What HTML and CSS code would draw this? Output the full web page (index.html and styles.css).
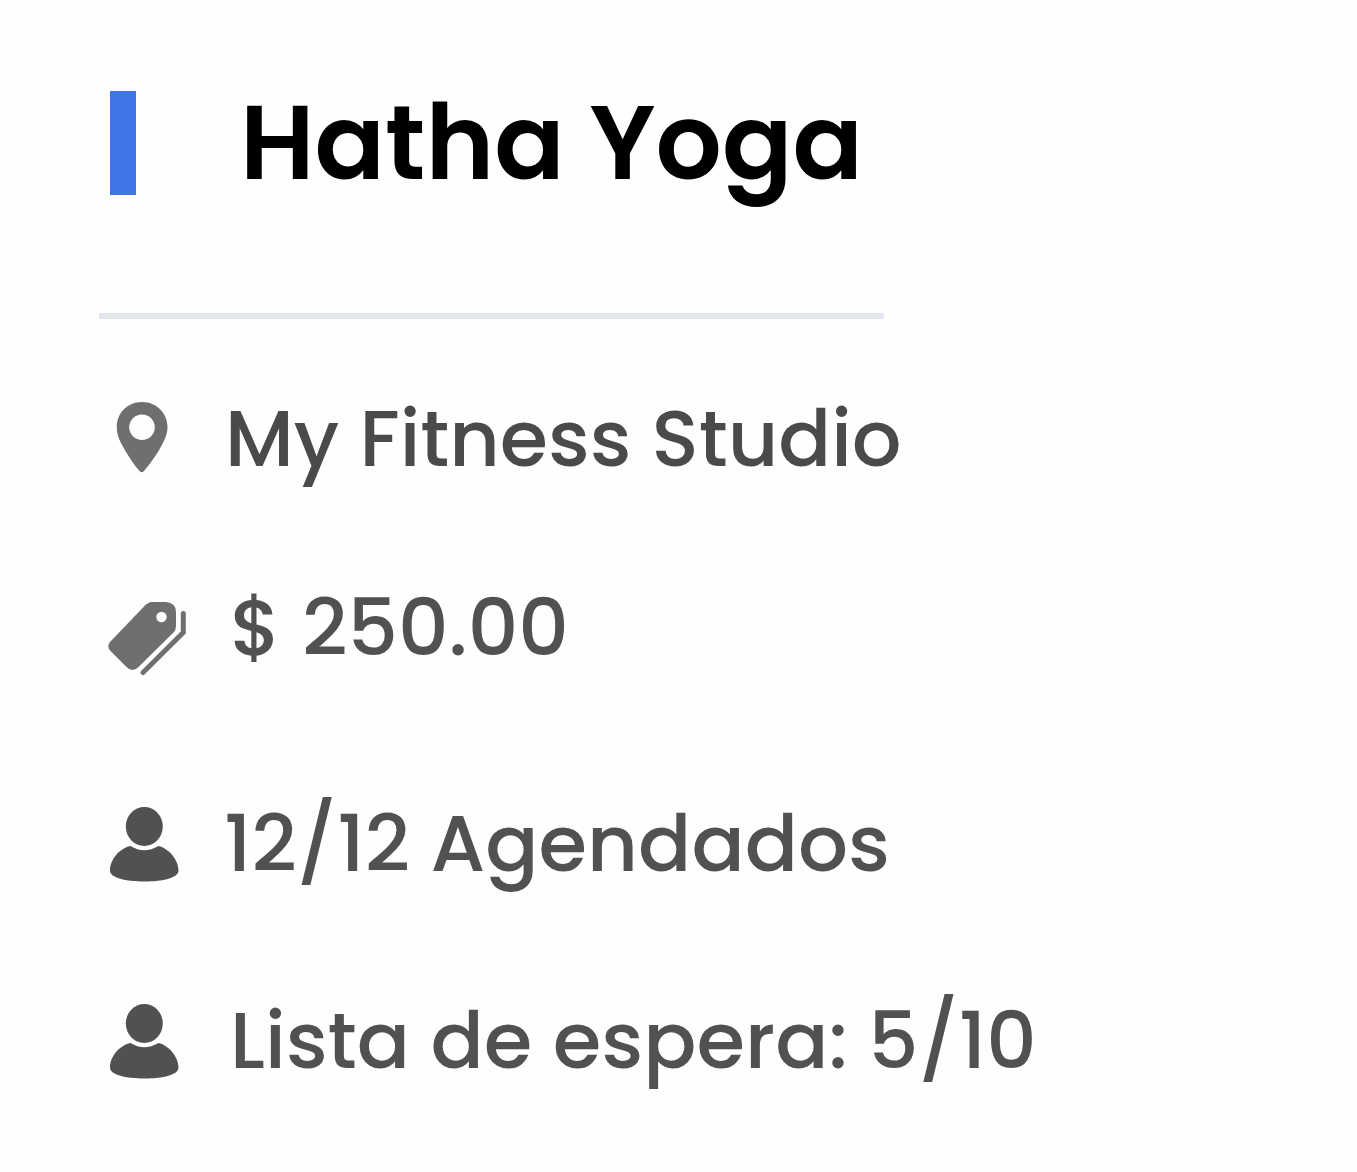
FILE: index.html
```html
<!DOCTYPE html>
<html lang="es">
<head>
  <meta charset="UTF-8" />
  <meta name="viewport" content="width=device-width, initial-scale=1.0"/>
  <title>Hatha Yoga</title>
  <link rel="stylesheet" href="styles.css">
</head>
<body>

<main class="class-card">
  <header class="card-header">
    <span class="color-bar"></span>
    <h1>Hatha Yoga</h1>
  </header>

  <ul class="details">
    <li class="detail location">
      <svg class="icon" width="90" height="80" viewBox="0 0 90 80">
        <path fill-rule="evenodd" d="M43 4C28.500 4 17.800 15 17.800 29C17.800 37 20.500 42.500 25 50.500C29.500 58.500 35 67 40.800 73.200Q42.800 75.500 44.800 73.200C50 67 56.500 58.500 61 50.500C65 43 68.500 37 68.500 29C68.500 15 57.500 4 43 4ZM43 16.500A12.800 12.800 0 1 1 43 42.100A12.800 12.800 0 1 1 43 16.500Z"/>
      </svg>
      <span class="text">My Fitness Studio</span>
    </li>
    <li class="detail price">
      <svg class="icon" width="90" height="80" viewBox="0 0 90 80">
        <path fill-rule="evenodd" d="M53 5H67Q77 6 77 15V29Q77 33 74.500 35.500L39.500 70Q33.500 76 27.500 70L11 53.500Q7.500 49 11 45L45 9.500Q49 5 53 5ZM62.500 14.800A5.200 5.200 0 1 0 62.500 25.200A5.200 5.200 0 1 0 62.500 14.800Z" transform="translate(0 11)"/>
        <path class="tag-edge" d="M84.300 27.500V46.500L44 86.500"/>
      </svg>
      <span class="text">$ 250.00</span>
    </li>
    <li class="detail booked">
      <svg class="icon" width="90" height="80" viewBox="0 0 90 80">
        <ellipse cx="45.300" cy="23.500" rx="18.500" ry="19.500"/>
        <path d="M31.500 43Q45 51.500 59.500 43C70 45.500 79.500 57 79.500 67.500C79.500 75 64 78.500 45.500 78.500S11 75 11 67.500C11 57 20 45.500 31.500 43Z"/>
      </svg>
      <span class="text">12/12 Agendados</span>
    </li>
    <li class="detail waitlist">
      <svg class="icon" width="90" height="80" viewBox="0 0 90 80">
        <ellipse cx="45.300" cy="23.500" rx="18.500" ry="19.500"/>
        <path d="M31.500 43Q45 51.500 59.500 43C70 45.500 79.500 57 79.500 67.500C79.500 75 64 78.500 45.500 78.500S11 75 11 67.500C11 57 20 45.500 31.500 43Z"/>
      </svg>
      <span class="text">Lista de espera: 5/10</span>
    </li>
  </ul>
</main>

</body>
</html>
```

FILE: styles.css
```css
* {
  box-sizing: border-box;
}

body {
  margin: 0;
  background-color: #fefefe;
  font-family: Poppins, Inter, sans-serif;
}

.class-card {
  min-height: 1172px;
  padding: 82px 0 0 99px;
}

.card-header {
  display: flex;
  width: 785px;
  height: 237px;
  padding-left: 11px;
  border-bottom: 6px solid #e4e6ee;
}

.color-bar {
  width: 26px;
  height: 104px;
  margin-top: 9px;
  background-color: #3f75e6;
}

h1 {
  margin: 0 0 0 104px;
  color: #000;
  font-size: 104px;
  font-weight: 600;
  line-height: 122px;
  white-space: nowrap;
}

.details {
  margin: 0;
  padding: 79px 0 0;
  list-style: none;
}

.detail {
  display: flex;
  height: 80px;
  color: #525053;
  font-size: 78.6px;
  font-weight: 500;
  line-height: 82px;
  white-space: nowrap;
}

.icon {
  flex: none;
  overflow: visible;
  fill: #525053;
}

.text {
  margin-left: 36px;
}

.location {
  color: #4b494c;
  font-size: 78px;
}

.location .icon,
.price .icon {
  fill: #706e71;
}

.price {
  margin-top: 108px;
  font-size: 79px;
  line-height: 84px;
}

.price .icon .tag-edge {
  fill: none;
  stroke: #706e71;
  stroke-width: 5;
  stroke-linecap: round;
}

.price .text,
.waitlist .text {
  margin-left: 41px;
}

.booked {
  margin-top: 137px;
}

.booked .text {
  margin-left: 35px;
}

.waitlist {
  margin-top: 117px;
}
```
